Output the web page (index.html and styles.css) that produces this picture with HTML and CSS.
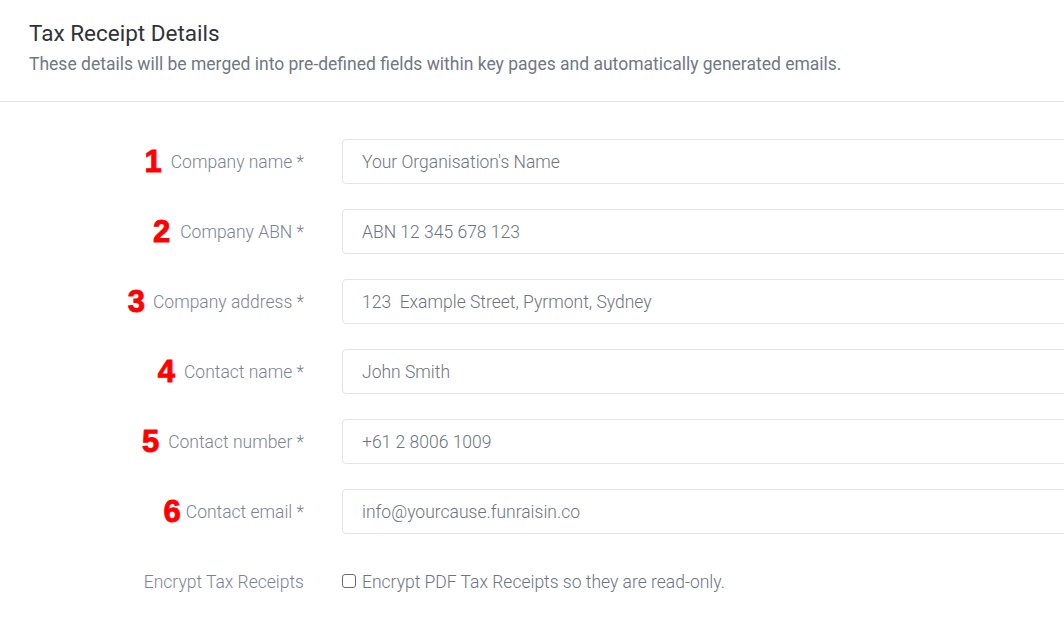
FILE: index.html
```html
<!DOCTYPE html>
<html>
<head>
<meta charset="utf-8">
<link rel="stylesheet" href="styles.css">
</head>
<body>
<div class="page">
  <header class="head">
    <h1 class="title">Tax Receipt Details</h1>
    <p class="subtitle">These details will be merged into pre-defined fields within key pages and automatically generated emails.</p>
  </header>
  <form class="form">
    <div class="row">
      <label class="label"><span class="num m1">1</span>Company name *</label>
      <input class="field" type="text" value="Your Organisation's Name">
    </div>
    <div class="row">
      <label class="label"><span class="num m2">2</span>Company ABN *</label>
      <input class="field" type="text" value="ABN 12 345 678 123">
    </div>
    <div class="row">
      <label class="label"><span class="num m3">3</span>Company address *</label>
      <input class="field" type="text" value="123  Example Street, Pyrmont, Sydney">
    </div>
    <div class="row">
      <label class="label"><span class="num m4">4</span>Contact name *</label>
      <input class="field" type="text" value="John Smith">
    </div>
    <div class="row">
      <label class="label"><span class="num m5">5</span>Contact number *</label>
      <input class="field" type="text" value="+61 2 8006 1009">
    </div>
    <div class="row">
      <label class="label"><span class="num m6">6</span>Contact email *</label>
      <input class="field" type="text" value="info@yourcause.funraisin.co">
    </div>
    <div class="row">
      <span class="label">Encrypt Tax Receipts</span>
      <label class="check"><input class="box" type="checkbox"><span>Encrypt PDF Tax Receipts so they are read-only.</span></label>
    </div>
  </form>
</div>
</body>
</html>
```

FILE: styles.css
```css
html, body {
  margin: 0;
  padding: 0;
  background: #ffffff;
  overflow: hidden;
}
body {
  font-family: Roboto, "Liberation Sans", Arial, sans-serif;
  width: 1064px;
  height: 627px;
}
.head {
  box-sizing: border-box;
  padding: 19px 29px 0;
  height: 102px;
  border-bottom: 1px solid #e5e5e5;
}
.title {
  margin: 0;
  font-size: 22.5px;
  font-weight: 400;
  line-height: 28px;
  color: #2f3337;
}
.subtitle {
  margin: 5px 0 0;
  font-size: 17.5px;
  font-weight: 400;
  line-height: 24px;
  color: #6f7884;
}
.form {
  padding-top: 37px;
  display: flex;
  flex-direction: column;
  gap: 25px;
}
.row {
  display: grid;
  grid-template-columns: 304px 760px;
  column-gap: 38px;
  align-items: center;
  height: 45px;
}
.label {
  display: flex;
  justify-content: flex-end;
  align-items: center;
  font-size: 17.5px;
  font-weight: 300;
  color: #7c8494;
  white-space: nowrap;
}
.num {
  font-family: "Liberation Sans", Arial, sans-serif;
  font-weight: 700;
  font-size: 31px;
  line-height: 1;
  color: #ff0000;
  -webkit-text-stroke: 0.9px #ff0000;
}
.m1 { margin-right: 9px; }
.m2 { margin-right: 10px; }
.m3 { margin-right: 8px; }
.m4 { margin-right: 9px; }
.m5 { margin-right: 9px; }
.m6 { margin-right: 5px; }
.field {
  box-sizing: border-box;
  height: 45px;
  width: 760px;
  margin: 0;
  border: 1px solid #e2e5e9;
  border-radius: 4px;
  padding: 0 19px;
  font-family: Roboto, "Liberation Sans", Arial, sans-serif;
  font-size: 17.5px;
  font-weight: 300;
  color: #6d7480;
  background: #fff;
  outline: none;
}
.check {
  display: flex;
  align-items: center;
  gap: 6px;
  font-size: 17.5px;
  font-weight: 300;
  color: #6d7480;
}
.box {
  appearance: none;
  -webkit-appearance: none;
  margin: 0;
  width: 14px;
  height: 14px;
  border: 1.5px solid #6b6b6b;
  border-radius: 3px;
  background: #fff;
  position: relative;
  top: -1px;
}
```
